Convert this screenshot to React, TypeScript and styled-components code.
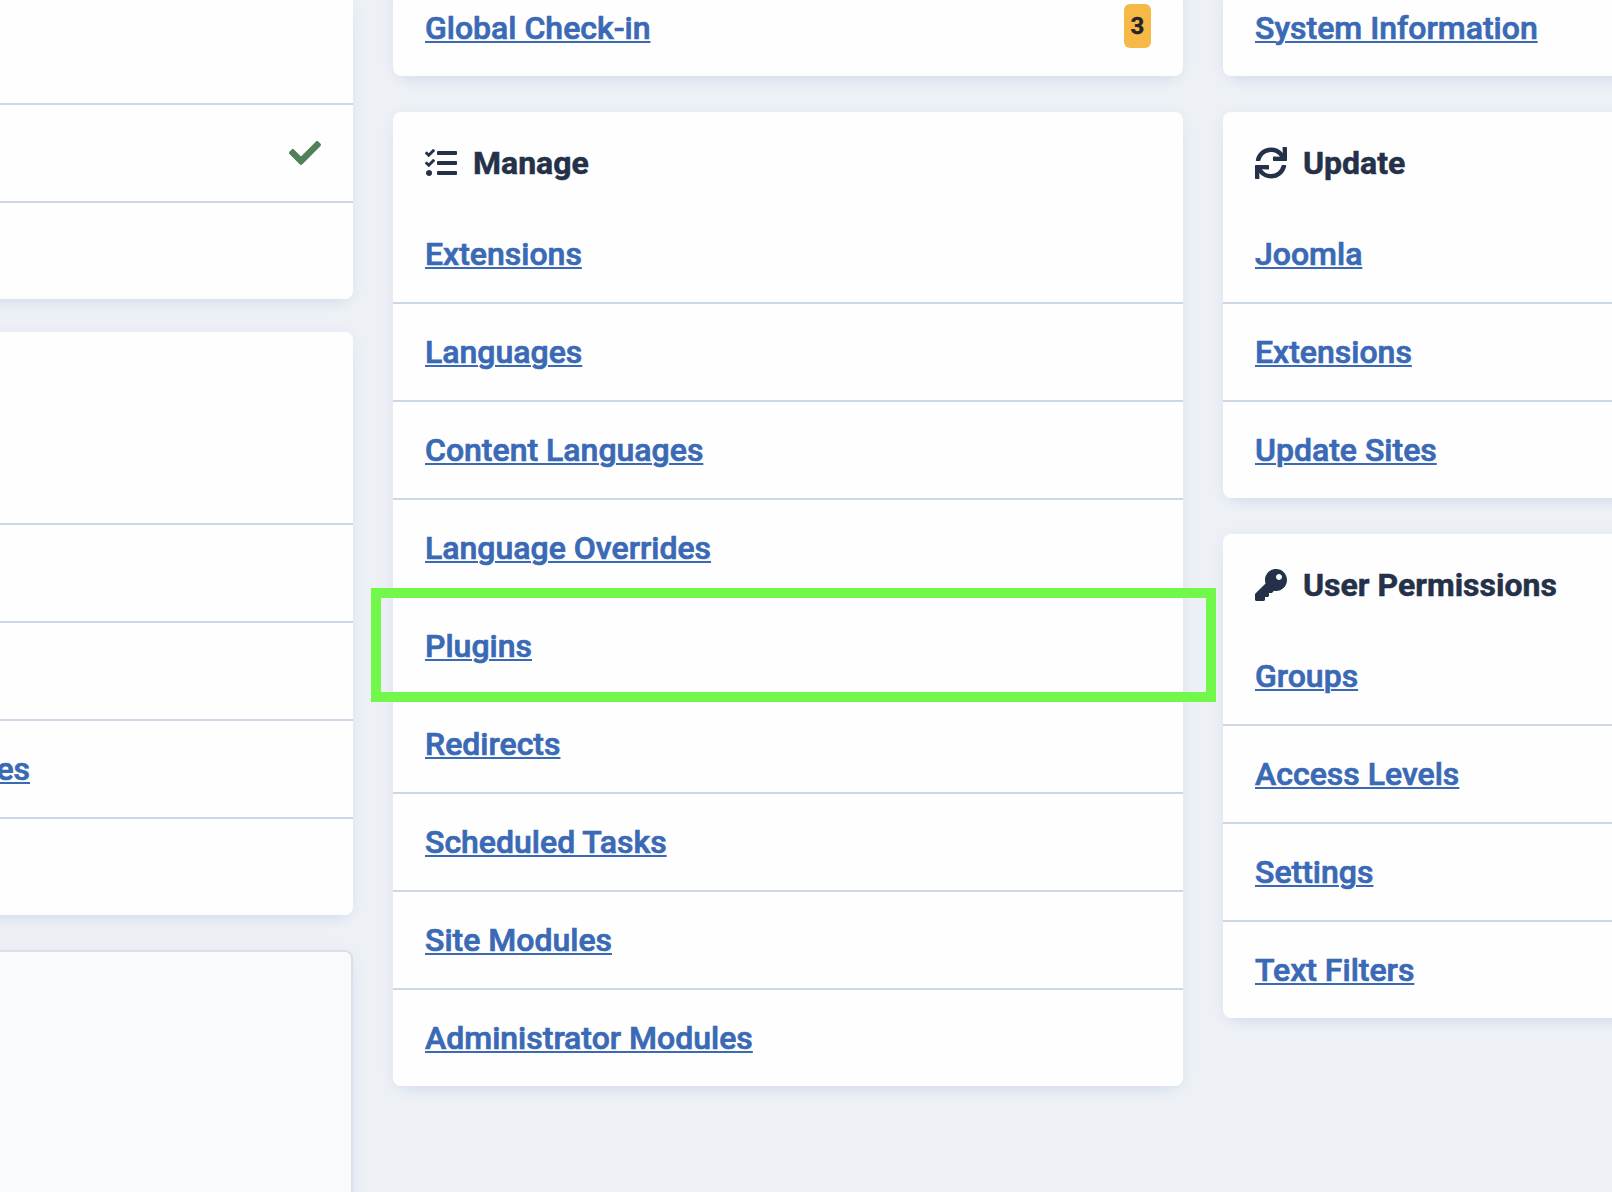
import React from "react";
import styled, { createGlobalStyle } from "styled-components";
import { FaCheck, FaKey, FaSync, FaTasks } from "react-icons/fa";

const GlobalStyle = createGlobalStyle`
  *, *::before, *::after { box-sizing: border-box; }
  body {
    margin: 0;
    overflow: hidden;
    background: #edf1f6;
    font-family: Roboto, "Liberation Sans", sans-serif;
  }
`;

const shadow = "0 9px 16px -10px rgba(40, 80, 150, 0.14), 0 2px 16px rgba(40, 80, 150, 0.05)";

const Dashboard = styled.main`
  display: grid;
  grid-template-columns: 353px 790px 389px;
  column-gap: 40px;
  height: 1192px;
  overflow: hidden;
`;

const Column = styled.div`
  display: flex;
  flex-direction: column;
  gap: 36px;
  min-width: 0;
`;

const Card = styled.section<{ $side?: "left" | "right"; $clipped?: boolean; $lift?: number }>`
  flex: none;
  background: #fefefe;
  margin-top: ${({ $lift = 0 }) => -$lift}px;
  margin-left: ${({ $side }) => ($side === "left" ? -40 : 0)}px;
  margin-right: ${({ $side }) => ($side === "right" ? -40 : 0)}px;
  border-radius: ${({ $clipped }) => ($clipped ? "0 0 8px 8px" : "8px")};
  box-shadow: ${shadow};
`;

const Header = styled.h2<{ $height?: number }>`
  display: flex;
  align-items: center;
  gap: 16px;
  height: ${({ $height = 94 }) => $height}px;
  margin: 0;
  padding: 8px 32px 0;
  color: #243149;
  font-size: 32px;
  font-weight: 700;
  line-height: 38px;
  -webkit-text-stroke: 0.5px #243149;

  svg { flex: none; }
`;

const List = styled.ul`
  margin: 0;
  padding: 0;
  list-style: none;
`;

const Row = styled.li<{ $height?: number }>`
  display: flex;
  align-items: center;
  justify-content: space-between;
  height: ${({ $height = 98 }) => $height}px;
  padding: 0 32px;
  border-bottom: 2px solid #cbd7e6;

  &:last-child {
    height: 96px;
    border-bottom: 0;
  }
`;

const Link = styled.a`
  color: #3a69b5;
  font-size: 32px;
  font-weight: 500;
  line-height: 48px;
  white-space: nowrap;
  text-decoration: underline;
  text-decoration-thickness: 2px;
  text-underline-offset: 2px;
  -webkit-text-stroke: 0.7px #3a69b5;
`;

const TrailingLink = styled(Link)`
  display: flex;
  justify-content: flex-end;
  width: 38px;
`;

const Badge = styled.span`
  width: 27px;
  height: 44px;
  margin-top: -4px;
  border-radius: 6px;
  background: #f6b946;
  color: #212529;
  font-size: 24px;
  font-weight: 700;
  line-height: 45px;
  text-align: center;
  -webkit-text-stroke: 0.4px #212529;
`;

const Status = styled.span`
  display: flex;
  margin-left: auto;
  color: #528059;
`;

const EmptyPanel = styled.section`
  flex: none;
  height: 280px;
  margin: -1px 0 0 -40px;
  border: 2px solid #d9e0ec;
  border-radius: 8px;
  background: #f9fafc;
  box-shadow: ${shadow};
`;

const Highlighted = styled(Row)`
  position: relative;

  &::after {
    content: "";
    position: absolute;
    z-index: 2;
    top: -10px;
    left: -22px;
    width: 845px;
    height: 114px;
    border: 10px solid #72f74b;
  }
`;

const manage = [
  "Extensions", "Languages", "Content Languages", "Language Overrides", "Plugins",
  "Redirects", "Scheduled Tasks", "Site Modules", "Administrator Modules",
];

function Links({ items }: { items: string[] }) {
  return (
    <List>
      {items.map((item) => {
        const Item = item === "Plugins" ? Highlighted : Row;
        return <Item key={item}><Link href="#">{item}</Link></Item>;
      })}
    </List>
  );
}

export default function App() {
  return (
    <>
      <GlobalStyle />
      <Dashboard>
        <Column>
          <Card $side="left" $clipped>
            <List>
              <Row $height={105} />
              <Row><Status><FaCheck size={32} /></Status></Row>
              <Row />
            </List>
          </Card>
          <Card $side="left" $lift={3}>
            <Header as="div" $height={95} />
            <List>
              <Row /><Row /><Row />
              <Row><TrailingLink href="#">es</TrailingLink></Row>
              <Row />
            </List>
          </Card>
          <EmptyPanel />
        </Column>
        <Column>
          <Card $clipped $lift={20}>
            <List><Row><Link href="#">Global Check-in</Link><Badge>3</Badge></Row></List>
          </Card>
          <Card>
            <Header><FaTasks size={32} />Manage</Header>
            <Links items={manage} />
          </Card>
        </Column>
        <Column>
          <Card $side="right" $clipped $lift={20}>
            <Links items={["System Information"]} />
          </Card>
          <Card $side="right">
            <Header><FaSync size={32} />Update</Header>
            <Links items={["Joomla", "Extensions", "Update Sites"]} />
          </Card>
          <Card $side="right">
            <Header><FaKey size={32} />User Permissions</Header>
            <Links items={["Groups", "Access Levels", "Settings", "Text Filters"]} />
          </Card>
        </Column>
      </Dashboard>
    </>
  );
}
